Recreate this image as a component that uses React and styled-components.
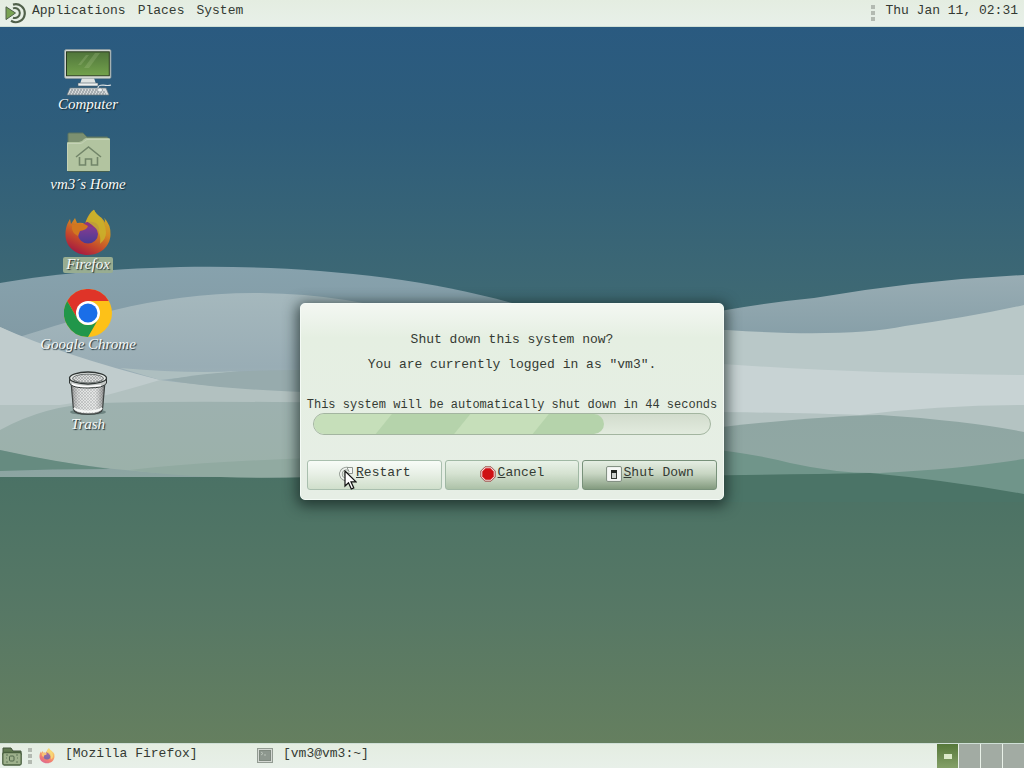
import React from "react";
import styled, { createGlobalStyle } from "styled-components";

const MONO = '"Liberation Mono", "Courier New", monospace';
const SERIF = '"Liberation Serif", "Times New Roman", serif';

const GlobalStyle = createGlobalStyle`
  * { box-sizing: border-box; }
  body { margin: 0; font-family: ${MONO}; font-size: 13px; color: #343a33; }
  button { font: inherit; color: inherit; margin: 0; cursor: default; }
`;

const Screen = styled.div`
  display: flex;
  flex-direction: column;
  min-height: 100vh;
`;

const Panel = styled.header`
  display: flex;
  align-items: stretch;
  justify-content: space-between;
  height: ${(p) => p.$height}px;
  background: linear-gradient(#e4ede1, #e8f0e9);
  border-${(p) => p.$edge}: 1px solid #cfdfd6;
`;

const PanelGroup = styled.nav`
  display: flex;
  align-items: center;
`;

const LogoButton = styled.button`
  display: flex;
  border: 0;
  background: none;
  padding: 0 5px;
`;

const Menus = styled.div`
  display: flex;
  gap: 12px;
  align-self: flex-start;
`;

const MenuButton = styled.button`
  border: 0;
  padding: 0;
  background: none;
  line-height: 21px;
`;

const Grip = styled.span`
  width: 4px;
  height: ${(p) => p.$size}px;
  background: repeating-linear-gradient(#b3bab1 0 4px, transparent 4px 6px);
`;

const Clock = styled.time`
  align-self: flex-start;
  line-height: 21px;
  padding: 0 6px 0 10px;
`;

const Desktop = styled.main`
  position: relative;
  flex: 1;
  display: flex;
  background: #4b7265;
`;

const Wallpaper = styled.svg`
  position: absolute;
  inset: 0;
  width: 100%;
  height: 100%;
`;

const Launchers = styled.div`
  position: relative;
  display: flex;
  flex-direction: column;
  align-items: center;
  gap: 16px;
  width: 176px;
  padding-top: 22px;
`;

const Launcher = styled.button`
  display: flex;
  flex-direction: column;
  align-items: center;
  border: 0;
  padding: 0;
  background: none;
`;

const LauncherLabel = styled.span`
  padding: 0 3px 2px;
  border-radius: 2px;
  background: ${(p) => (p.$selected ? "#98ad91" : "transparent")};
  color: #f7faf8;
  font: italic 15px/14px ${SERIF};
  text-shadow: 1px 1px 1px #182a31;
  white-space: nowrap;
`;

const DialogLayer = styled.div`
  position: absolute;
  inset: 0;
  display: flex;
  align-items: center;
  justify-content: center;
  padding-top: 32px;
  pointer-events: none;
`;

const Dialog = styled.section`
  width: 424px;
  max-width: 100%;
  padding: 23px 6px 9px;
  border: 1px solid #f4faf5;
  border-radius: 5px;
  background: linear-gradient(#f3f7f2 0, #e5efe2 34px, #e6eee5 100%);
  box-shadow: 0 3px 14px 3px rgba(20, 34, 32, 0.72);
  text-align: center;
  pointer-events: auto;
`;

const Message = styled.p`
  margin: 0;
  line-height: 25px;
`;

const Countdown = styled.p`
  display: flex;
  justify-content: center;
  margin: 20px 0 0;
  font-size: 12px;
  line-height: 16px;
  white-space: nowrap;
`;

const ProgressTrack = styled.div`
  height: 22px;
  margin: 0 6px 25px;
  overflow: hidden;
  border: 1px solid #a3b5a0;
  border-radius: 11px;
  background: linear-gradient(#d2dccd, #e2ebde);
`;

const ProgressFill = styled.div`
  height: 100%;
  border-radius: 0 10px 10px 0;
  background: repeating-linear-gradient(129deg, #c6dfba 0 60px, #b5d3ab 61px 121px, #c6dfba 122px);
`;

const Actions = styled.div`
  display: grid;
  grid-template-columns: repeat(3, 1fr);
  gap: 3px;
`;

const tones = {
  hover: "border-color: #a9bfae; background: linear-gradient(#f8fcf8, #e8f0e6 45%, #d0dfcb);",
  normal: "border-color: #a0b8a4; background: linear-gradient(#e9f2e8, #d5e2d1 45%, #adc2a8);",
  primary: "border-color: #78917a; background: linear-gradient(#e5eee3, #c8d6c3 45%, #839b7f);",
};

const ActionButton = styled.button`
  display: flex;
  align-items: center;
  justify-content: center;
  gap: 2px;
  height: 30px;
  padding: 0 0 4px;
  border: 1px solid;
  border-radius: 3px;
  ${(p) => tones[p.$tone]}
  line-height: 22px;
`;

const ActionIcon = styled.span`
  position: relative;
  display: flex;
  padding-top: 3px;
`;

const Pointer = styled.svg`
  position: absolute;
  top: 7px;
  left: 6px;
`;

const FolderButton = styled(LogoButton)`
  align-items: flex-end;
  padding: 0 6px 2px 2px;
`;

const Tasks = styled.div`
  display: flex;
  flex: 1;
  align-self: stretch;
  margin-left: 7px;
`;

const TaskButton = styled.button`
  display: flex;
  align-items: flex-start;
  gap: 10px;
  width: 218px;
  padding: 0;
  border: 0;
  background: none;
  line-height: 20px;
  text-align: left;

  svg { margin-top: 4px; }
`;

const Workspaces = styled.div`
  display: flex;
  gap: 1px;
  background: #e9f1e8;
`;

const Workspace = styled.button`
  display: flex;
  align-items: center;
  justify-content: center;
  width: 21px;
  border: 0;
  padding: 0;
  background: ${(p) => (p.$active ? "linear-gradient(#56783a, #84a068)" : "#a2aba3")};
`;

const WindowMark = styled.span`
  width: 8px;
  height: 5px;
  background: #dbe9c9;
`;

function MateLogo() {
  return (
    <svg width="22" height="22" viewBox="0 0 22 22" fill="none" stroke="#50604a">
      <path d="M8 2.600A9 9 0 1 1 6 18.800" strokeWidth="2.200" />
      <path d="M8 6.400A5 5 0 1 1 8 15.700" strokeWidth="2" />
      <path d="M1 4.800v12.800L10.500 11Z" fill="#79a354" strokeWidth="1" />
    </svg>
  );
}

function ComputerIcon() {
  return (
    <svg width="48" height="48" viewBox="0 0 48 48">
      <defs>
        <linearGradient id="screen" x2="0" y2="1">
          <stop stopColor="#50753b" />
          <stop offset="1" stopColor="#73a24c" />
        </linearGradient>
      </defs>
      <path d="M18 29h12l2 6H16Z" fill="#dfe3e2" />
      <path d="M14 34h20v3H14Z" fill="#edf0ef" stroke="#4d6069" strokeWidth=".6" />
      <rect x=".8" y=".8" width="46" height="28.4" rx="1" fill="#e8ece7" stroke="#9aa6a5" />
      <rect x="2.5" y="2.8" width="42.8" height="24" fill="url(#screen)" stroke="#29391f" />
      <path d="m20 19 11-15h5L25 19ZM14 16l8-10h3l-8 10Z" fill="#b9d19c" opacity=".22" />
      <path d="M6 39h36l3 7H3Z" fill="#d7dadb" stroke="#64737a" strokeWidth=".7" />
      <path d="M7 41h33M6 43h35M5 45h37" stroke="#788288" strokeDasharray="2 1" />
      <path d="M34 39q0-3 5-3 5 1 8 0" fill="none" stroke="#dce2e4" strokeWidth="1.2" />
      <ellipse cx="36" cy="41" rx="2.5" ry="2" fill="#eff2f2" stroke="#778187" strokeWidth=".5" />
    </svg>
  );
}

function HomeIcon() {
  return (
    <svg width="48" height="48" viewBox="0 0 48 48">
      <path d="M4 5q0-1 1-1h14l4 4h20q1 0 1 1v9H4Z" fill="#7c9070" stroke="#5a7462" />
      <path d="M3 42V14q0-1 1-1h11q3 0 5-3l2-1h22q2 0 2 1v32Z" fill="#b2c4a0" />
      <path d="M3.5 42V14.5H16q3 0 5-3l2-1h22.5" fill="none" stroke="#c5d2b6" />
      <path d="M4 42h41v1H4Z" fill="#455f50" />
      <path d="m12 28 12.5-10L37 28M15.5 28v8h6v-6h6v6h6v-8" fill="none" stroke="#728569" strokeWidth="1.6" />
    </svg>
  );
}

function FirefoxIcon({ size = 48, pale = false }) {
  const id = pale ? "task" : "desk";
  return (
    <svg width={size} height={size} viewBox="0 0 48 48" opacity={pale ? 0.72 : 1}>
      <defs>
        <linearGradient id={`${id}-flame`} x1=".8" y1="0" x2=".3" y2="1">
          <stop stopColor={pale ? "#ffda45" : "#c9b72f"} />
          <stop offset=".4" stopColor={pale ? "#ff9b35" : "#d48a22"} />
          <stop offset=".72" stopColor={pale ? "#f65245" : "#c4472c"} />
          <stop offset="1" stopColor={pale ? "#d93572" : "#a31843"} />
        </linearGradient>
        <linearGradient id={`${id}-globe`} x2="0" y2="1">
          <stop stopColor="#8c3b91" />
          <stop offset="1" stopColor="#493b94" />
        </linearGradient>
      </defs>
      <path d="M30 .8c1 3 3 5 6 7 2 1 4 4 5 6q0-4-1-5 7 7 6.500 17C46 38 36 46 24 46 11 46 1 37 1.500 25 1.500 18 4 13 6 10l1 5 4-6 2 5q5-1 8 1C23 8 27 2 30 .8Z" fill={`url(#${id}-flame)`} />
      <ellipse cx="24" cy="25" rx="10" ry="9.500" fill={`url(#${id}-globe)`} />
      <path d="M18 16q6-6 14-2 4 3 3 9-2-4-7-5-5 0-10-2Z" fill="#8c3480" />
      <path d="M30 .8c2 5 12 10 12 23 0 4-2 8-6 11 1-6 0-13-6-17-3-3-6-5-8-5Q26 4 30 .8Z" fill={pale ? "#ffd34f" : "#c9b22c"} opacity=".85" />
      <path d="M8 16q10-4 16 1-1 4-8 5l-2 5Q7 24 8 16Z" fill={pale ? "#ffb34b" : "#d2771f"} />
    </svg>
  );
}

function ChromeIcon() {
  return (
    <svg width="48" height="48" viewBox="0 0 48 48">
      <circle cx="24" cy="24" r="24" fill="#fdc118" />
      <path d="M3.200 12A24 24 0 0 1 44.800 12H24L13.600 30Z" fill="#df3428" />
      <path d="M3.200 12A24 24 0 0 0 24 48L34.400 30A12 12 0 0 1 13.600 30Z" fill="#21964a" />
      <circle cx="24" cy="24" r="12" fill="#fff" />
      <circle cx="24" cy="24" r="9.500" fill="#1a6ee8" />
    </svg>
  );
}

function TrashIcon() {
  return (
    <svg width="48" height="48" viewBox="0 0 48 48">
      <defs>
        <pattern id="mesh" width="3" height="3" patternUnits="userSpaceOnUse">
          <rect width="3" height="3" fill="#dadcdb" />
          <path d="m0 0 3 3M3 0 0 3" stroke="#8d9090" strokeWidth=".5" />
        </pattern>
        <linearGradient id="basket">
          <stop stopColor="#555" stopOpacity=".6" />
          <stop offset=".3" stopColor="#fff" stopOpacity=".2" />
          <stop offset=".7" stopColor="#fff" stopOpacity=".3" />
          <stop offset="1" stopColor="#444" stopOpacity=".6" />
        </linearGradient>
      </defs>
      <ellipse cx="24" cy="43" rx="18" ry="3" fill="#263e3b" opacity=".4" />
      <path d="m7 12 2.500 28q1 5 14.500 5t14.500-5L41 12Z" fill="url(#mesh)" stroke="#343a39" strokeWidth="1.300" />
      <path d="m7 12 2.500 28q1 5 14.500 5t14.500-5L41 12Z" fill="url(#basket)" />
      <path d="M10 39q3 3.500 14 3.500T38 39" stroke="#f6f8f7" strokeWidth="2" fill="none" />
      <path d="M5.500 9v5q2 5 18.500 5t18.500-5V9Z" fill="#c5c9c7" stroke="#303635" />
      <ellipse cx="24" cy="9" rx="18.500" ry="6" fill="#e9ecea" stroke="#303635" strokeWidth="1.300" />
      <ellipse cx="24" cy="9.500" rx="15.500" ry="4.400" fill="url(#mesh)" stroke="#6b7170" />
      <path d="M8 15q5 2.500 16 2.500l13-1" fill="none" stroke="#fff" strokeWidth="1.500" />
    </svg>
  );
}

function RestartIcon() {
  return (
    <svg width="16" height="16" viewBox="0 0 16 16" fill="none">
      <path d="M11.500 3.500A5.500 5.500 0 1 0 13 11" stroke="#8e958e" strokeWidth="3.400" />
      <path d="M11.500 3.500A5.500 5.500 0 1 0 13 11" stroke="#eff3ef" strokeWidth="1.800" />
      <path d="M9 1.500h5.500v6H9l2-2Z" fill="#f4f7f4" stroke="#8e958e" />
      <circle cx="8" cy="8" r="2" stroke="#abb1aa" />
    </svg>
  );
}

function CancelIcon() {
  return (
    <svg width="16" height="16" viewBox="0 0 16 16">
      <path d="M5 .8h6L15.200 5v6L11 15.200H5L.8 11V5Z" fill="#f7dcda" stroke="#9d504c" />
      <path d="M5.500 2.300h5l3.200 3.200v5l-3.200 3.200h-5l-3.200-3.200v-5Z" fill="#cf1114" />
    </svg>
  );
}

function SwitchIcon() {
  return (
    <svg width="16" height="16" viewBox="0 0 16 16">
      <rect x=".5" y=".5" width="15" height="15" rx="1.500" fill="#edf0ed" stroke="#849184" />
      <rect x="2" y="2" width="12" height="12" fill="#f5f7f5" />
      <rect x="5.500" y="4.500" width="5" height="8" fill="#cdd1cd" stroke="#343834" />
      <path d="M5 4h6v3H5Z" fill="#202420" />
    </svg>
  );
}

function PointerArrow() {
  return (
    <Pointer width="13" height="20" viewBox="0 0 13 20" aria-hidden="true">
      <path d="M1 1v15l3.500-3.300L7.300 19l2.500-1.100L7 11.800h5Z" fill="#fff" stroke="#111" strokeWidth="1.200" />
    </Pointer>
  );
}

function FolderIcon() {
  return (
    <svg width="20" height="20" viewBox="0 0 20 20">
      <path d="M1 2h8l2 3h8v4H1Z" fill="#617951" stroke="#40523b" />
      <rect x=".8" y="6.500" width="18.400" height="12.500" rx="1.500" fill="#9eb18c" stroke="#49603f" strokeWidth="1.300" />
      <rect x="7.500" y="10" width="4.500" height="5" rx="1" fill="none" stroke="#50664a" />
      <path d="M4 9h2M4 12h1M4 16h2M14 9h2M15 12h1M14 16h2" stroke="#60765a" />
    </svg>
  );
}

function TerminalIcon() {
  return (
    <svg width="16" height="16" viewBox="0 0 16 16">
      <rect x=".5" y=".5" width="15" height="14" fill="#d4d8d3" stroke="#929b92" />
      <rect x="2.500" y="2.500" width="11" height="10" fill="#8d978e" stroke="#7f897f" />
      <path d="m4 4 2 1.500L4 7M7 7h2" fill="none" stroke="#b9c2b8" />
    </svg>
  );
}

function Waves() {
  return (
    <Wallpaper viewBox="0 27 1024 716" preserveAspectRatio="none" aria-hidden="true">
      <defs>
        <linearGradient id="sky" x2="0" y2="1">
          <stop stopColor="#2a5a80" />
          <stop offset=".14" stopColor="#2e5d7b" />
          <stop offset=".36" stopColor="#3d6874" />
          <stop offset=".64" stopColor="#4b7265" />
          <stop offset=".82" stopColor="#577865" />
          <stop offset="1" stopColor="#657f5f" />
        </linearGradient>
        <linearGradient id="crest" x2="0" y2="1">
          <stop stopColor="#87a2ad" />
          <stop offset=".4" stopColor="#8199a3" />
          <stop offset="1" stopColor="#8da5a2" />
        </linearGradient>
        <linearGradient id="swell" x2="0" y2="1">
          <stop stopColor="#a5b8bd" />
          <stop offset=".5" stopColor="#99adb5" />
          <stop offset="1" stopColor="#aabbbb" />
        </linearGradient>
        <linearGradient id="foot" x2="0" y2="1">
          <stop stopColor="#9db1af" />
          <stop offset="1" stopColor="#9bb1a9" />
        </linearGradient>
        <linearGradient id="right" x2="0" y2="1">
          <stop stopColor="#99adb4" />
          <stop offset="1" stopColor="#849da6" />
        </linearGradient>
        <linearGradient id="basin" x2="0" y2="1">
          <stop stopColor="#8fa6a3" />
          <stop offset="1" stopColor="#91a9a3" />
        </linearGradient>
      </defs>
      <rect y="27" width="1024" height="716" fill="url(#sky)" />
      <path d="M0 283C130 260 350 257 512 303L650 350V477H0Z" fill="url(#crest)" />
      <path d="M0 343C70 321 155 292 260 293Q350 294 430 320V440H0Z" fill="url(#swell)" />
      <path d="M0 327Q75 364 160 380Q240 391 430 395V450H0Z" fill="#b2c1c0" />
      <path d="M0 327Q65 356 160 380Q90 401 60 405H0Z" fill="#c0cccd" />
      <path d="M120 368Q190 374 240 371L160 380Z" fill="#aebfc0" />
      <path d="M168 380Q215 370 300 370H430V394Q240 394 168 380Z" fill="#97abad" />
      <path d="M0 430Q45 405 100 403Q190 400 430 404V477H310Q120 479 0 450Z" fill="url(#foot)" />
      <path d="M130 470Q200 462 310 458H430V477H310Q200 480 130 470Z" fill="#91aaa1" />
      <path d="M0 450Q55 462 110 469Q50 469 0 471Z" fill="#668b80" />
      <path d="M600 337Q720 307 814 298Q920 280 1024 275V345H600Z" fill="url(#right)" />
      <path d="M600 330H727Q845 338 905 326Q970 317 1024 305V390H600Z" fill="#b9c8c8" />
      <path d="M600 353Q780 373 1024 375V440H600Z" fill="#c8d3d4" />
      <path d="M600 411Q780 412 860 415Q940 405 1024 405V450H600Z" fill="#b4c3c2" />
      <path d="M600 443Q780 417 880 415Q970 421 1024 432V500H600Z" fill="url(#basin)" />
      <path d="M600 440Q730 447 790 463Q840 474 880 473Q960 469 1024 459V500H600Z" fill="#70958a" />
      <path d="M600 477Q760 475 870 473Q945 480 1024 494V502H600Z" fill="#4b7467" />
    </Wallpaper>
  );
}

const launchers = [
  { label: "Computer", Icon: ComputerIcon },
  { label: "vm3´s Home", Icon: HomeIcon },
  { label: "Firefox", Icon: FirefoxIcon, selected: true },
  { label: "Google Chrome", Icon: ChromeIcon },
  { label: "Trash", Icon: TrashIcon },
];

const remaining = 44;
const timeout = 60;

export default function App() {
  return (
    <>
      <GlobalStyle />
      <Screen>
        <Panel $height={27} $edge="bottom">
          <PanelGroup aria-label="Main menu">
            <LogoButton aria-label="MATE menu"><MateLogo /></LogoButton>
            <Menus>
              {["Applications", "Places", "System"].map((name) => (
                <MenuButton key={name}>{name}</MenuButton>
              ))}
            </Menus>
          </PanelGroup>
          <PanelGroup as="div">
            <Grip $size={16} />
            <Clock>Thu Jan 11, 02:31</Clock>
          </PanelGroup>
        </Panel>

        <Desktop>
          <Waves />
          <Launchers>
            {launchers.map(({ label, Icon, selected }) => (
              <Launcher key={label}>
                <Icon />
                <LauncherLabel $selected={selected}>{label}</LauncherLabel>
              </Launcher>
            ))}
          </Launchers>
          <DialogLayer>
            <Dialog role="dialog" aria-labelledby="question">
              <Message id="question">Shut down this system now?</Message>
              <Message>You are currently logged in as "vm3".</Message>
              <Countdown id="countdown">
                This system will be automatically shut down in {remaining} seconds
              </Countdown>
              <ProgressTrack
                role="progressbar"
                aria-labelledby="countdown"
                aria-valuemin={0}
                aria-valuemax={timeout}
                aria-valuenow={remaining}
              >
                <ProgressFill style={{ width: `${(remaining / timeout) * 100}%` }} />
              </ProgressTrack>
              <Actions>
                <ActionButton $tone="hover">
                  <ActionIcon><RestartIcon /><PointerArrow /></ActionIcon>
                  <span><u>R</u>estart</span>
                </ActionButton>
                <ActionButton $tone="normal">
                  <ActionIcon><CancelIcon /></ActionIcon>
                  <span><u>C</u>ancel</span>
                </ActionButton>
                <ActionButton $tone="primary">
                  <ActionIcon><SwitchIcon /></ActionIcon>
                  <span><u>S</u>hut Down</span>
                </ActionButton>
              </Actions>
            </Dialog>
          </DialogLayer>
        </Desktop>

        <Panel as="footer" $height={25} $edge="top">
          <FolderButton aria-label="Show desktop"><FolderIcon /></FolderButton>
          <PanelGroup as="div"><Grip $size={16} /></PanelGroup>
          <Tasks>
            <TaskButton><FirefoxIcon size={16} pale />[Mozilla Firefox]</TaskButton>
            <TaskButton><TerminalIcon />[vm3@vm3:~]</TaskButton>
          </Tasks>
          <Workspaces>
            {[1, 2, 3, 4].map((n) => (
              <Workspace key={n} $active={n === 1} aria-label={`Workspace ${n}`}>
                {n === 1 && <WindowMark />}
              </Workspace>
            ))}
          </Workspaces>
        </Panel>
      </Screen>
    </>
  );
}
